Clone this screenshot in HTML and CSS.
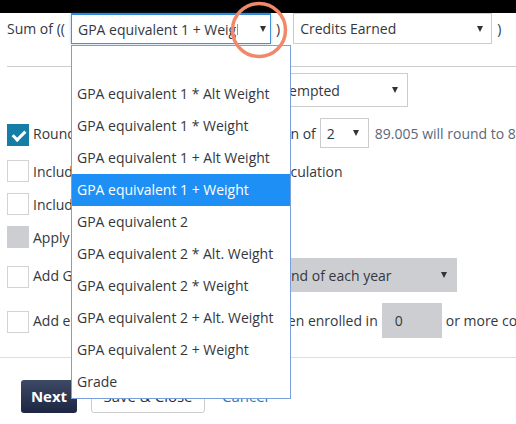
FILE: index.html
```html
<!DOCTYPE html>
<html lang="en">
<head>
    <meta charset="UTF-8">
    <meta name="viewport" content="width=device-width, initial-scale=1.0">
    <title>GPA Calculation</title>
    <link rel="stylesheet" href="styles.css">
</head>
<body>
    <div class="topbar"></div>

    <div class="page">
        <div class="formula">
            <span class="formula-label">Sum of ((</span>
            <div class="select select-open">
                <span class="select-text">GPA equivalent 1 + Weight</span>
                <span class="caret"></span>
            </div>
            <span class="paren">)</span>
            <div class="select select-credits">
                <span class="select-text">Credits Earned</span>
                <span class="caret"></span>
            </div>
            <span class="paren paren-last">)</span>
        </div>

        <div class="divider"></div>

        <div class="row row-divisor">
            <span class="row-text">Divided by</span>
            <div class="select select-attempted">
                <span class="select-text">Credits Attempted</span>
                <span class="caret"></span>
            </div>
        </div>

        <div class="row row-round">
            <span class="checkbox checked"></span>
            <span class="row-text">Round the GPA up to a decimal precision of</span>
            <div class="select select-small">
                <span class="select-text">2</span>
                <span class="caret"></span>
            </div>
            <span class="hint">89.005 will round to 89.01</span>
        </div>

        <div class="row row-include">
            <span class="checkbox"></span>
            <span class="row-text">Include audited courses in your GPA calculation</span>
        </div>

        <div class="row row-plain">
            <span class="checkbox"></span>
            <span class="row-text">Include transfer credits</span>
        </div>

        <div class="row row-plain">
            <span class="checkbox disabled"></span>
            <span class="row-text">Apply weighting</span>
        </div>

        <div class="row row-year">
            <span class="checkbox"></span>
            <span class="row-text">Add GPA history to transcript</span>
            <div class="select select-gray">
                <span class="select-text">At the end of each year</span>
                <span class="caret"></span>
            </div>
        </div>

        <div class="row row-enrolled">
            <span class="checkbox"></span>
            <span class="row-text">Add extra weight to honors courses when enrolled in</span>
            <div class="number-box">0</div>
            <span class="row-text">or more courses</span>
        </div>

        <div class="footer-line"></div>

        <div class="buttons">
            <button class="btn btn-primary">Next</button>
            <button class="btn btn-secondary">Save &amp; Close</button>
            <a class="cancel" href="#">Cancel</a>
        </div>

        <!-- open list of the first select -->
        <ul class="dropdown">
            <li></li>
            <li>GPA equivalent 1 * Alt Weight</li>
            <li>GPA equivalent 1 * Weight</li>
            <li>GPA equivalent 1 + Alt Weight</li>
            <li class="active">GPA equivalent 1 + Weight</li>
            <li>GPA equivalent 2</li>
            <li>GPA equivalent 2 * Alt. Weight</li>
            <li>GPA equivalent 2 * Weight</li>
            <li>GPA equivalent 2 + Alt. Weight</li>
            <li>GPA equivalent 2 + Weight</li>
            <li>Grade</li>
        </ul>

        <svg class="highlight" width="60" height="60" viewBox="0 0 60 60">
            <circle cx="30" cy="30" r="26.5" fill="none" stroke="#f0896a" stroke-width="3.5"/>
        </svg>
    </div>
</body>
</html>
```

FILE: styles.css
```css
body {
    margin: 0;
    padding: 0;
    font-family: "Open Sans", Arial, sans-serif;
    font-size: 14px;
    color: #333840;
    background-color: #fff;
    overflow: hidden;
}
.topbar {
    height: 13px;
    background-color: #000;
}
.page {
    position: relative;
}
.formula {
    display: flex;
    align-items: center;
    height: 31px;
    padding-left: 7px;
    white-space: nowrap;
}
.formula-label {
    width: 64px;
}
.paren {
    margin: 0 13px 0 5px;
}
.paren-last {
    margin: 0 0 0 5px;
}
.select {
    display: flex;
    align-items: center;
    box-sizing: border-box;
    border: 1px solid #ccc;
    background-color: #fff;
    padding: 0 8px 0 6px;
    white-space: nowrap;
}
.select-text {
    flex: 1;
    overflow: hidden;
}
.caret {
    width: 0;
    height: 0;
    border-left: 3.5px solid transparent;
    border-right: 3.5px solid transparent;
    border-top: 6px solid #333;
}
.select-open {
    width: 200px;
    height: 31px;
    border-color: #4a90d9;
    border-top: 2px solid #2f8ae0;
    box-shadow: 0 0 3px rgba(47, 138, 224, 0.4);
    padding-right: 8px;
}
.select-open .select-text {
    flex: none;
    width: 160px;
    margin-right: 22px;
}
.select-credits {
    width: 199px;
    height: 31px;
}
.divider {
    height: 1px;
    background-color: #ccc;
    margin: 22px 0 0 7px;
}
.row {
    display: flex;
    align-items: center;
    padding-left: 7px;
    white-space: nowrap;
}
.row-text {
    margin-right: 4px;
}
.checkbox {
    flex: none;
    box-sizing: border-box;
    width: 22px;
    height: 22px;
    border: 1px solid #d3d3d3;
    background-color: #fff;
    margin-right: 4px;
    position: relative;
}
.checkbox.checked {
    background-color: #147ea7;
    border-color: #147ea7;
}
.checkbox.checked::after {
    content: "";
    position: absolute;
    left: 7px;
    top: 3px;
    width: 5px;
    height: 10px;
    border-right: 3px solid #fff;
    border-bottom: 3px solid #fff;
    transform: rotate(45deg);
}
.checkbox.disabled {
    background-color: #cdced2;
    border-color: #cdced2;
}
.row-divisor {
    margin-top: 6px;
    padding-left: 128px;
}
.select-attempted {
    width: 200px;
    height: 34px;
    margin-left: 8px;
    padding: 0 9px 0 11px;
}
.row-round {
    margin-top: 11px;
    height: 30px;
}
.row-round .checkbox {
    margin-top: 4px;
}
.select-small {
    flex: none;
    width: 49px;
    height: 30px;
    padding-right: 9px;
}
.hint {
    margin-left: 6px;
    color: #5b6778;
}
.row-include {
    margin-top: 12px;
}
.row-plain {
    margin-top: 11px;
}
.row-year {
    margin-top: 10px;
    height: 34px;
}
.row-year .checkbox,
.row-enrolled .checkbox {
    margin-top: 3px;
}
.select-gray {
    flex: none;
    width: 223px;
    height: 34px;
    margin-left: 7px;
    background-color: #cdced1;
    border-color: #cdced1;
    padding-right: 9px;
}
.row-enrolled {
    margin-top: 11px;
    height: 35px;
}
.row-enrolled .row-text:first-of-type {
    margin-right: 5px;
}
.number-box {
    flex: none;
    box-sizing: border-box;
    width: 60px;
    height: 35px;
    line-height: 35px;
    padding-left: 13px;
    background-color: #cdced1;
    margin-right: 4px;
}
.footer-line {
    height: 1px;
    background-color: #ddd;
    margin-top: 19px;
}
.buttons {
    display: flex;
    align-items: center;
    padding-left: 21px;
    margin-top: 21px;
}
.btn {
    font-family: "Open Sans", Arial, sans-serif;
    font-size: 15px;
    border-radius: 3px;
    height: 34px;
}
.btn-primary {
    width: 56px;
    height: 33px;
    color: #fff;
    font-weight: bold;
    border: none;
    background: linear-gradient(#3e4966, #1c2642);
}
.btn-secondary {
    width: 114px;
    margin-left: 14px;
    color: #333;
    background-color: #fff;
    border: 1px solid #ccc;
}
.cancel {
    margin-left: 17px;
    color: #2b7bb9;
    text-decoration: none;
    font-size: 15px;
}
.dropdown {
    position: absolute;
    left: 71px;
    top: 32px;
    width: 218px;
    margin: 0;
    padding: 0;
    list-style: none;
    border: 1px solid #7b9fdc;
    background-color: #fff;
    white-space: nowrap;
}
.dropdown li {
    height: 32px;
    line-height: 32px;
    padding-left: 5px;
    color: #333840;
}
.dropdown li.active {
    background-color: #1e8ff5;
    color: #fff;
}
.highlight {
    position: absolute;
    left: 229px;
    top: -13px;
}
```
